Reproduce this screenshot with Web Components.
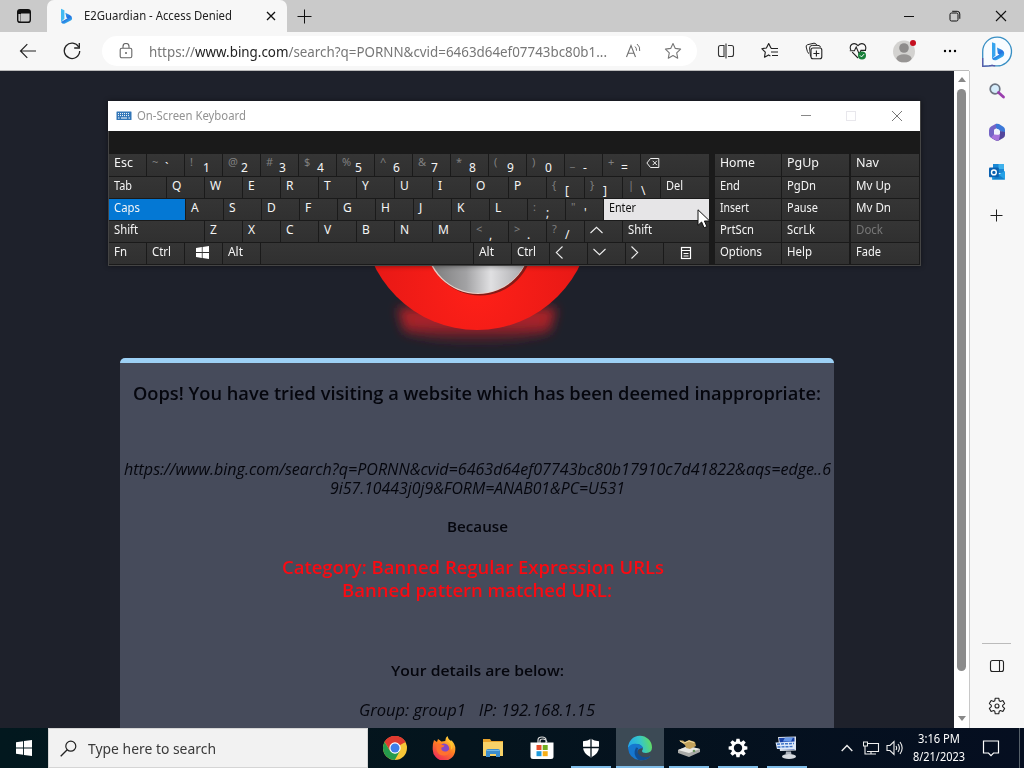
<!DOCTYPE html>
<html lang="en"><head><meta charset="utf-8"><title>E2Guardian - Access Denied</title>
<style>html,body{margin:0;height:100%;overflow:hidden}body{font-family:"Noto Sans","Open Sans",sans-serif}</style></head>
<body><desk-top></desk-top>
<script>
const define=(name,html,after)=>customElements.define(name,class extends HTMLElement{
  connectedCallback(){ if(this.shadowRoot)return; this.attachShadow({mode:'open'}).innerHTML=typeof html==='function'?html(this):html; if(after)after(this); }
});

/* text set to a given width */
define('fit-text',`<style>:host{display:inline-block;flex:none;white-space:pre}span{display:inline-block;transform-origin:0 50%}</style><span><slot></slot></span>`,el=>{
  const w=+el.getAttribute('w'),s=el.shadowRoot.querySelector('span'),n=s.getBoundingClientRect().width;
  if(w&&n){el.style.width=w+'px';s.style.transform=`scaleX(${w/n})`;}
});

const bing=`<defs><linearGradient id="b" x1="0" y1="0" x2=".6" y2="1"><stop offset="0" stop-color="#38b6f2"/><stop offset=".6" stop-color="#2470e0"/><stop offset="1" stop-color="#37bdf0"/></linearGradient></defs>`;
const gearPath=(r1,r2,n,cx,cy)=>{let d='';for(let i=0;i<n;i++){const a=i*2*Math.PI/n,s=Math.PI/n;[[-.78,r1],[-.42,r2],[.42,r2],[.78,r1]].forEach(([k,r],j)=>{d+=(i||j?'L':'M')+(cx+r*Math.sin(a+k*s)).toFixed(2)+' '+(cy-r*Math.cos(a+k*s)).toFixed(2)})}return d+'Z'};
const icons={
 tabs:[16,16,`<rect x="1.7" y="1.7" width="12.6" height="12.6" rx="2.4" fill="none" stroke="#111" stroke-width="1.4"/><path d="M1.7 5.5V4Q1.7 1.7 4 1.7h8q2.3 0 2.3 2.3v1.5zM2 4h3v10H4.6V6H2z" fill="#111"/>`],
 bing:[13,16,bing+`<path d="M1 .8l3.4 1.4v8.6L1 14z" fill="#42baf2"/><path d="M5.3 4.8l4.1 1.9q2.7 1.2 2.7 3.5 0 1.6-1.3 2.4L5 15.6q-2.4.9-4-1.6l6.5-3.7-1.1-.7z" fill="url(#b)"/>`],
 x:[12,12,`<path d="M2 2l8 8M10 2l-8 8" stroke="#111" stroke-width="1.3"/>`],
 plus:[15,15,`<path d="M7.5 .5v14M.5 7.5h14" stroke="#111"/>`],
 plus2:[13,13,`<path d="M6.5 .5v12M.5 6.5h12" stroke="#222"/>`],
 min:[12,12,`<path d="M1 6.5h10" stroke="#111"/>`],
 restore:[12,12,`<rect x="1" y="3" width="8" height="8" rx="1.5" fill="none" stroke="#111"/><path d="M3.2 1.3h5Q10.8 1.3 10.8 4v4.8" fill="none" stroke="#111"/>`],
 close:[12,12,`<path d="M1 1l10 10M11 1L1 11" stroke="#111" stroke-width="1.1"/>`],
 back:[18,16,`<path d="M17 8H1.5M8.3 1.2L1.5 8l6.8 6.8" fill="none" stroke="#222" stroke-width="1.2"/>`],
 reload:[18,18,`<path d="M15.7 5A7.7 7.7 0 1 0 16.7 9" fill="none" stroke="#222" stroke-width="1.3"/><path d="M16.3 1v5H11.2" fill="none" stroke="#222" stroke-width="1.3"/>`],
 lock:[14,16,`<rect x="1.2" y="5.2" width="11.6" height="9.6" rx="1.6" fill="none" stroke="#666" stroke-width="1.1"/><path d="M4 5V3.5a3 3 0 0 1 6 0V5" fill="none" stroke="#666" stroke-width="1.1"/><circle cx="7" cy="10" r="1" fill="#666"/>`],
 read:[18,16,`<path d="M1.5 14L6 2.5 10.5 14M3 10.3h6" fill="none" stroke="#707070" stroke-width="1.1"/><path d="M10 3.5q1.8 1.6 1.5 4.2M12 1q3.4 2.8 2.7 7" fill="none" stroke="#707070"/>`],
 star:[18,18,`<path d="M9 1.5l2.3 4.9 5.3.7-3.9 3.7 1 5.4L9 13.6l-4.7 2.6 1-5.4L1.4 7.1l5.3-.7z" fill="none" stroke="#777" stroke-width="1.1" stroke-linejoin="round"/>`],
 split:[18,18,`<path d="M7 3.5H3.5Q1.5 3.5 1.5 5.5v7q0 2 2 2H7zM11 3.5h3.500q2 0 2 2v7q0 2-2 2H11M9 1.500v15" fill="none" stroke="#333" stroke-width="1.100"/>`],
 fav:[18,18,`<path d="M10.5 6H9.9L7.7 1.5 5.4 6l-4.6.7 3.5 3.5-.8 5 4.1-2.3 1.8 1M10 6.5h7M10 10h7M11 13.5h6" fill="none" stroke="#222" stroke-width="1.15" stroke-linejoin="round"/>`],
 coll:[18,18,`<path d="M4 11.5Q2.8 11 2.4 9.5L1.2 5Q.8 3.2 2.6 2.7L9 1.2Q11 1 11.6 3M5.5 14.5L4.6 6q0-2.6 2.6-2.6H13q2.3 0 2.6 2" fill="none" stroke="#222"/><rect x="6" y="6" width="10.8" height="10.8" rx="2" fill="#f7f7f7" stroke="#222" stroke-width="1.1"/><path d="M11.4 8.5v6M8.4 11.5h6" stroke="#222" stroke-width="1.1"/>`],
 heart:[18,18,`<path d="M1.8 8Q.3 4.7 2.6 2.5 5.9.2 9 3.6q3.1-3.4 6.4-1.1Q17.6 4.7 16.4 8M3.2 10.2L9 16" fill="none" stroke="#222" stroke-width="1.1"/><path d="M.8 8.8h4.6L7.2 5l3 7 1.8-3.6h5" fill="none" stroke="#222" stroke-width="1.1"/><circle cx="13" cy="13.4" r="4" fill="#18803a"/><path d="M11 13.4l1.5 1.5 2.6-2.8" fill="none" stroke="#fff"/>`],
 user:[24,24,`<circle cx="12" cy="12.5" r="11" fill="#d3d2d0"/><circle cx="12" cy="9" r="4.8" fill="#8e8c8b"/><ellipse cx="12" cy="19.3" rx="7.5" ry="4" fill="#979594"/><circle cx="21" cy="4" r="3" fill="#c50f1f"/>`],
 dots:[16,4,`<circle cx="3" cy="2" r="1.2"/><circle cx="8" cy="2" r="1.2"/><circle cx="13" cy="2" r="1.2"/>`],
 bchat:[32,32,bing+`<path d="M1.7 30.3V16A14.4 14.4 0 1 1 14.2 29.8Q11 29.2 8 29.8z" fill="#f8fcff" stroke="#388fc4" stroke-width="1.3"/><path d="M1.700 22v8.300L8 29.800Q11 29.200 14.200 29.800" fill="none" stroke="#5a5aa8" stroke-width="1.300"/><path d="M11 6.2l3.4 1.4v12L11 23z" fill="#36a4ee"/><path d="M16 11.5l4.2 2q3 1.3 3 4.2 0 2-1.5 3L15.8 24q-3 1-4.8-1.2l7.4-4.4-1.6-1z" fill="url(#b)"/>`],
 search:[18,18,`<circle cx="7" cy="7" r="4.8" fill="#d5ecfb" stroke="#6d7582" stroke-width="1.7"/><path d="M10.5 10.5l5 4.5" stroke="#9a3eae" stroke-width="2.8" stroke-linecap="round"/>`],
 office:[18,18,`<path d="M8 .8L3 3.6Q1 5 1 7.2v4.2q0 2 1.6 3L7 17l1-4-2-1.2V6.7L11 3.5z" fill="#7565c6"/><path d="M8 .8q1.6-.4 3 .3l4.3 2.6q1.7 1 1.7 3v3.6l-5-2.4-4-2.8z" fill="#3c78d8"/><path d="M17 9v3q0 2-1.8 3l-4 2.2q-1.8 1-3.8 0L3 14.5l3.3-2 5.5-1 .2-3.6z" fill="#54469c"/><circle cx="9" cy="9" r="2.9" fill="#f2f4fd"/><path d="M3 14.5l3-3 6 .4-1 5q-2 1-4 0z" fill="#a875dc"/>`],
 outlook:[18,18,`<path d="M5 1h11v9H5z" fill="#1b88d4"/><path d="M10.5 1H16v5h-5.5z" fill="#3fb1ec"/><path d="M4 8l6.5 3.5L17 8v8.5H4z" fill="#25a1e7"/><path d="M10.5 11.5L17 16.5H4z" fill="#1680ca"/><rect x="1" y="4.5" width="9.8" height="9.8" rx="1" fill="#0a61b1"/><circle cx="5.9" cy="9.4" r="2.4" fill="none" stroke="#fff" stroke-width="1.4"/>`],
 panel:[16,14,`<rect x="1.5" y="1.5" width="13" height="11" rx="2" fill="none" stroke="#222" stroke-width="1.1"/><path d="M10.5 1.5v11" stroke="#222" stroke-width="1.1"/>`],
 cog:[18,18,`<path d="${gearPath(5.7,8,6,9,9)}" fill="none" stroke="#222" stroke-width="1.1" stroke-linejoin="round"/><circle cx="9" cy="9" r="2" fill="none" stroke="#222" stroke-width="1.1"/>`],
 kb:[16,10,`<rect x=".5" y=".5" width="15" height="8.6" rx=".5" fill="#3276b8"/><path d="M2 2.6h12M2 4.6h12" stroke="#fff" stroke-dasharray="1 1"/><path d="M2 7h1.5M5 7h6M12.5 7H14" stroke="#fff"/>`],
 wmin:[12,12,`<path d="M1 5.5h10" stroke="#888"/>`],
 wmax:[12,12,`<rect x="1.5" y="1.5" width="9" height="9" fill="none" stroke="#e8e7ec"/>`],
 wclose:[12,12,`<path d="M1 1l10 10M11 1L1 11" stroke="#777"/>`],
 bksp:[14,12,`<path d="M4.5 1.5h8.3v9H4.5L.9 6zM6.7 3.8l4.2 4.3M10.9 3.8L6.7 8.1" fill="none" stroke="#eee"/>`],
 up:[13,8,`<path d="M.5 7L6.500 1.3 12.500 7" fill="none" stroke="#eee" stroke-width="1.1"/>`],
 down:[13,8,`<path d="M.5 1L6.500 6.7 12.500 1" fill="none" stroke="#eee" stroke-width="1.1"/>`],
 left:[8,13,`<path d="M7.500 .5L1.3 6.500 7.500 12.500" fill="none" stroke="#eee" stroke-width="1.1"/>`],
 right:[8,13,`<path d="M.5 .5L6.7 6.500 .5 12.500" fill="none" stroke="#eee" stroke-width="1.1"/>`],
 win:[13,13,`<path d="M0 2l5.8-.9v5H0zM6.6 1L13 0v6.1H6.6zM0 6.9h5.8v5L0 11zM6.6 6.9H13V13l-6.4-1z" fill="#fff"/>`],
 menu:[12,14,`<rect x="1.5" y="1.5" width="9" height="11" fill="none" stroke="#fff" stroke-width="1.2"/><path d="M1 4.5h10M3.5 7.5h5M3.5 10h5" stroke="#fff" stroke-width="1.2"/>`],
 start:[16,16,`<path d="M0 2.3l7.1-1v6.3H0zM8 1.1L16 0v7.6H8zM0 8.5h7.1v6.3L0 13.8zM8 8.5h8V16l-8-1.1z" fill="#fff"/>`],
 find:[17,17,`<circle cx="10.8" cy="6.2" r="5" fill="none" stroke="#222" stroke-width="1.2"/><path d="M7.2 9.8L.7 16.3" stroke="#222" stroke-width="1.3"/>`],
 chrome:[24,24,`<circle cx="12" cy="12" r="12" fill="#f8c636"/><path d="M12 12L1.6 6a12 12 0 0 1 20.8 0z" fill="#df3a30"/><path d="M12 6.3h10.5A12 12 0 0 0 1.6 6l5.5 8.8z" fill="#df3a30"/><path d="M1.6 6A12 12 0 0 0 11.8 24l5.2-9.2L12 17.5l-5-2.8z" fill="#259b4c"/><circle cx="12" cy="12" r="5.7" fill="#fff"/><circle cx="12" cy="12" r="4.5" fill="#3f7de9"/>`],
 firefox:[24,24,`<defs><linearGradient id="f" x1=".8" y1="0" x2=".2" y2="1"><stop offset="0" stop-color="#ffe040"/><stop offset=".45" stop-color="#ff8020"/><stop offset="1" stop-color="#ee245f"/></linearGradient></defs><path d="M2 4l3 2 1-3q2 1 3.3 2.5Q12 5 13.3 5 13.2 2 15.4 0q.6 3 3.3 4.7l1-.1q4 4 3.6 9.3A11.3 11.3 0 0 1 .7 13Q.5 8 2 4z" fill="url(#f)"/><circle cx="12" cy="12.8" r="5.2" fill="#8748c5"/><path d="M4.5 8q3.6-.8 6 1l2 .4q-.6 2-3 2.1-1 3 3 4 4 0 5.4-3.6Q19 18.3 13 19.5 6 20 4.6 14z" fill="#ff712f"/><path d="M14.5 4.8Q20.3 8 18.9 14q2.2-2 1.8-5.7-.6-2.5-3-3.3z" fill="#ffc52d"/>`],
 folder:[22,20,`<path d="M1 1h7l1.4 2H21v6H1z" fill="#e9a42c"/><path d="M1 4h20v14H1z" fill="#f8d268"/><path d="M4 19v-6q0-2 2-2h10q2 0 2 2v6h-4v-3H8v3z" fill="#3d8ecd"/><path d="M4.5 12.5h13" stroke="#75bae8"/>`],
 store:[24,24,`<path d="M8 7V4q0-3 4-3t4 3v3M10 7V5q0-2 3-2t4 3" fill="none" stroke="#ddd" stroke-width="1.2"/><path d="M.5 6.5h23v14q0 2.5-2.5 2.5H3q-2.5 0-2.5-2.5z" fill="#fff"/><path d="M6.5 9h5v5h-5z" fill="#e74f2d"/><path d="M12.7 9h5v5h-5z" fill="#73ad22"/><path d="M6.5 15.2h5v5h-5z" fill="#1d9bdc"/><path d="M12.7 15.2h5v5h-5z" fill="#f6ae17"/>`],
 shield:[18,20,`<path d="M9 .8Q12 3.2 17 3.3V9q0 6.5-8 10.5Q1 15.5 1 9V3.3Q6 3.2 9 .8z" fill="#fff"/><path d="M9 1v18M1 9.5h16" stroke="#06131c" stroke-width="1.3"/>`],
 edge:[26,26,`<defs><linearGradient id="e" x1="0" y1=".4" x2="1" y2=".2"><stop offset="0" stop-color="#25a8e9"/><stop offset=".5" stop-color="#35c6c9"/><stop offset="1" stop-color="#68df55"/></linearGradient></defs><path d="M1 13A12 12 0 0 1 25 12.5Q25 17.5 19 18q-4-.2-4-2 1.5-1.8.5-4Q12.5 8 7 9.5 3 10.5 1 13z" fill="url(#e)"/><path d="M1 13Q4 7.5 11 9q4 1 5 4-7 .5-5.5 6.5 2.3 5.5 8.5 3.5l4.5-1.8Q19 26.2 12 25 2 23.5 1 13z" fill="#1677cf"/><path d="M9 12.5Q5 20 11.5 24.9 19.5 26 23.5 21.2q-5 2-9 .3Q8.5 18 11.2 13z" fill="#114e93"/>`],
 drive:[24,20,`<path d="M1 12l10-4 12 3v3l-11 5-11-4z" fill="#a9aaa7"/><path d="M1 12l10-4 12 3-11 4z" fill="#e9e9e5"/><path d="M2 2.500l4 0 2 1.500 4-2 6 2 1 4-6 3-4-1-1-3z" fill="#c3a35d"/><path d="M3 3l4 2 5-2 5 1.500" stroke="#f2dda1" fill="none"/><circle cx="17" cy="13" r="1.3" fill="#66915c"/>`],
 gear:[20,20,`<path d="${gearPath(6.8,9.5,8,10,10)}" fill="#fff"/><circle cx="10" cy="10" r="4.2" fill="#06111e"/>`],
 monitor:[24,24,`<path d="M3 1l18-.5v14L5 15z" fill="#dce2ea"/><path d="M4 2l15.500-.5v12L6 13z" fill="#1841a6"/><path d="M10 1.5l8 0-2 4-8 0z" fill="#6899e7"/><path d="M.5 6.500l20-1v7.500L2 13z" fill="#dfeafa"/><path d="M2 8.200l17-.8M2.5 11l16-.5" stroke="#3f74c8" stroke-dasharray="3 1" stroke-width="1.500"/><path d="M11 15.500h5l.5 3h-6z" fill="#aeb4bd"/><ellipse cx="14" cy="20.5" rx="7" ry="2.5" fill="#d5d9de"/>`],
 chev:[12,8,`<path d="M.7 7L6 1.6 11.3 7" fill="none" stroke="#eee" stroke-width="1.4"/>`],
 net:[18,16,`<path d="M5.5 3.5H16.5v8H5M9 11.5v2M6 14h8M3 6v8h3" fill="none" stroke="#eee" stroke-width="1.1"/><rect x="1.5" y="2" width="4" height="4" fill="#06131d" stroke="#eee"/>`],
 sound:[18,16,`<path d="M1 5.5h3l4-4v13l-4-4H1z" fill="none" stroke="#eee" stroke-width="1.1"/><path d="M10 6q1.3 2 0 4M12 4q2.8 4 0 8M14 2q4.3 6 0 12" fill="none" stroke="#eee" stroke-width="1.1"/>`],
 note:[18,18,`<path d="M1.5 2h15v12h-5L9 16.6 6.5 14h-5z" fill="none" stroke="#fff" stroke-width="1.2"/>`],
 arrow:[14,20,`<path d="M1 .8v15.5l3.6-3.3 2.5 5.8 2.8-1.2-2.5-5.6h5.3z" fill="#fff" stroke="#111"/>`],
 triUp:[8,5,`<path d="M0 5l4-5 4 5z" fill="#888"/>`],
 triDn:[8,5,`<path d="M0 0l4 5 4-5z" fill="#888"/>`]
};
define('ui-icon',el=>{const [w,h,s]=icons[el.getAttribute('name')];return `<style>:host{display:block;flex:none;width:${w}px;height:${h}px}svg{display:block}</style><svg width="${w}" height="${h}" viewBox="0 0 ${w} ${h}">${s}</svg>`});
const cell=(n,w,style='')=>`<div class="c" style="width:${w}px;${style}"><ui-icon name="${n}"></ui-icon></div>`;
const cellCss=`.c{display:flex;align-items:center;justify-content:center;flex:none;box-sizing:border-box}`;

define('tab-strip',`<style>:host{display:flex;height:32px;background:#cacaca}${cellCss}
.tab{box-sizing:border-box;width:240px;background:#f7f7f7;border-radius:7px 7px 0 0;display:flex;align-items:center;padding:0 10px 0 13px;font-size:12px;color:#222}fit-text{margin:-1px 0 0 11px}.sp{flex:1}</style>
${cell('tabs',47)}<div class="tab"><ui-icon name="bing"></ui-icon><fit-text w="148">E2Guardian - Access Denied</fit-text><div class="sp"></div><ui-icon name="x"></ui-icon></div>${cell('plus',35)}<div class="sp"></div>${cell('min',46)}${cell('restore',46)}${cell('close',46)}`);

define('tool-bar',`<style>:host{display:flex;box-sizing:border-box;height:39px;background:#f7f7f7;border-bottom:1px solid #bbb;padding-left:6px}${cellCss}
.addr{display:flex;align-items:center;box-sizing:border-box;width:595px;height:30px;margin:4px 7px 0 8px;background:#fff;border-radius:15px;padding-left:17px;font-size:14.5px;color:#777;flex:none}b{font-weight:400;color:#222}fit-text{margin:-1px 11px 0 16px}.c{height:38px}.addr .c{height:30px}</style>
${cell('back',44)}${cell('reload',44)}<div class="addr"><ui-icon name="lock"></ui-icon><fit-text w="458">https://<b>www.bing.com</b>/search?q=PORNN&amp;cvid=6463d64ef07743bc80b1...</fit-text>${cell('read',32)}${cell('star',46)}</div>
${cell('split',44)}${cell('fav',44)}${cell('coll',44)}${cell('heart',44)}${cell('user',48)}${cell('dots',44)}`);

define('side-bar',`<style>:host{display:flex;flex-direction:column;box-sizing:border-box;background:#f7f7f7;align-items:center}.pane{flex:1;width:55px;border-left:1px solid #c8c8c8;display:flex;flex-direction:column;align-items:center;padding:11px 1px 0 0;box-sizing:border-box}
.top{height:39px;display:flex;align-items:center}.pane ui-icon{margin-bottom:22.5px}.sp{flex:1}hr{width:29px;border:0;border-top:1px solid #bbb;margin:0 0 15.5px}.pane ui-icon:last-child{margin-bottom:13px}ui-icon[name=panel]{margin-bottom:24px!important}ui-icon[name=plus2]{margin-top:5px}</style>
<div class="top"><ui-icon name="bchat"></ui-icon></div><div class="pane"><ui-icon name="search"></ui-icon><ui-icon name="office"></ui-icon><ui-icon name="outlook"></ui-icon><ui-icon name="plus2"></ui-icon><div class="sp"></div><hr><ui-icon name="panel"></ui-icon><ui-icon name="cog"></ui-icon></div>`);

define('scroll-bar',`<style>:host{display:flex;flex-direction:column;align-items:center;background:#fff;box-sizing:border-box;padding:6px 0 7px}.t{width:9px;flex:1;background:#8b8b8b;border-radius:5px;margin:7px 0 45px}</style><ui-icon name="triUp"></ui-icon><div class="t"></div><ui-icon name="triDn"></ui-icon>`);

define('denied-page',`<style>:host{display:flex;flex-direction:column;align-items:center;background:#1e212b;overflow:hidden;font-family:"Open Sans","Noto Sans",sans-serif}
.hero{height:287px;width:714px;flex:none}svg{display:block}
.box{box-sizing:border-box;width:714px;height:500px;flex:none;background:#464b5b;border-top:5px solid #9dd1f6;border-radius:5px 5px 0 0;display:flex;flex-direction:column;align-items:center;color:#05060d}
.box>div{height:20px;line-height:20px;white-space:nowrap;font-size:15.5px}.box .h{font-size:18px;font-weight:600;margin-top:20px}.i{font-style:italic}.box>.u{height:19px;line-height:19px}.box fit-text{display:block}.s{font-weight:600}.box .r{font-size:18.5px;font-weight:600;color:#fa0a12}</style>
<div class="hero"><svg width="714" height="287" viewBox="120 71 714 287"><defs><radialGradient id="r" cx=".5" cy=".82" r=".6"><stop offset="0" stop-color="#ff2018"/><stop offset="1" stop-color="#e01615"/></radialGradient><linearGradient id="g"><stop offset="0" stop-color="#777"/><stop offset=".38" stop-color="#a2a2a4"/><stop offset=".62" stop-color="#e0e0e2"/><stop offset="1" stop-color="#a0a0a3"/></linearGradient><linearGradient id="gl" x1="0" y1="0" x2="0" y2="1"><stop offset="0" stop-color="#b82028"/><stop offset=".55" stop-color="#9c2029"/><stop offset="1" stop-color="#5c2029" stop-opacity=".3"/></linearGradient><filter id="bl" x="-30%" y="-60%" width="160%" height="220%"><feGaussianBlur stdDeviation="5.5"/></filter></defs>
<path d="M398 308H556L550 332Q477 354 404 332z" fill="url(#gl)" filter="url(#bl)"/><circle cx="477" cy="216" r="114" fill="url(#r)"/><circle cx="480" cy="242.5" r="53" fill="#861b17"/><circle cx="478" cy="241.5" r="52.500" fill="#eccfc7"/><circle cx="478.500" cy="241.500" r="51.500" fill="url(#g)"/></svg></div>
<div class="box"><div class="h"><fit-text w="688">Oops! You have tried visiting a website which has been deemed inappropriate:</fit-text></div>
<div class="i u" style="margin-top:57px"><fit-text w="707">https://www.bing.com/search?q=PORNN&amp;cvid=6463d64ef07743bc80b17910c7d41822&amp;aqs=edge..6</fit-text></div>
<div class="i u"><fit-text w="295">9i57.10443j0j9&amp;FORM=ANAB01&amp;PC=U531</fit-text></div>
<div class="s" style="margin-top:18px;font-size:15px"><fit-text w="61">Because</fit-text></div>
<div class="r" style="margin-top:21px;margin-right:8px"><fit-text w="382">Category: Banned Regular Expression URLs</fit-text></div>
<div class="r" style="margin-top:3px"><fit-text w="270">Banned pattern matched URL:</fit-text></div>
<div class="s" style="margin-top:60px;font-size:15px"><fit-text w="173">Your details are below:</fit-text></div>
<div class="i" style="margin-top:20px"><fit-text w="236">Group: group1   IP: 192.168.1.15</fit-text></div></div>`);

/* one key: label (optionally fitted to w), a shifted symbol, or an icon */
define('osk-key',el=>{const a=n=>el.getAttribute(n)||'';const e=s=>s.replace(/&/g,'&amp;').replace(/</g,'&lt;');
 const body=a('icon')?`<div class="ic"><ui-icon name="${a('icon')}"></ui-icon></div>`:a('shift')?`<span class="s">${e(a('shift'))}</span><span class="n">${e(a('label'))}</span>`:a('fit')?`<fit-text w="${a('fit')}">${a('label')}</fit-text>`:e(a('label'));
 return `<style>:host{display:flex;box-sizing:border-box;background:linear-gradient(#353535,#303030);color:#f5f5f5;font-size:12px;line-height:18px;padding-left:5px;overflow:hidden;white-space:pre}:host([on]){background:#0478d4}:host([hot]){background:#e6e5e7;color:#111}:host([off]){color:#777}.s{color:#808080;width:13px;font-size:11px;margin-top:-1px}.n{margin-top:5px}.ic{height:18px;display:flex;align-items:center}:host([mid]){padding:0 2px 2px 0;justify-content:center;align-items:center}</style>${body}`});

const K=(w,label,o='')=>`<osk-key style="width:${w}px" label="${label.replace(/&/g,'&amp;').replace(/"/g,'&quot;')}" ${o}></osk-key>`;
const F=(w,l,f,o='')=>K(w,l,`fit="${f}" ${o}`);
const S=(l,s)=>K(37,l,`shift="${s.replace(/&/g,'&amp;').replace(/"/g,'&quot;')}"`);
const I=(w,n,o='')=>K(w,'',`icon="${n}" ${o}`);
const L=s=>[...s].map(c=>K(37,c)).join('');
const main=[
 F(37,'Esc',19)+['`~','1!','2@','3#','4$','5%','6^','7&','8*','9(','0)','-_','=+'].map(p=>S(p[0],p[1])).join('')+I(68,'bksp'),
 F(57,'Tab',18)+L('QWERTYUIOP')+S('[','{')+S(']','}')+S('\\','|')+F(48,'Del',17),
 F(76,'Caps',26,'on')+L('ASDFGHJKL')+S(';',':')+S("'",'"')+F(105,'Enter',27,'hot'),
 F(95,'Shift',24)+L('ZXCVBNM')+S(',','<')+S('.','>')+S('/','?')+I(37,'up')+F(86,'Shift',24),
 F(37,'Fn',13)+F(37,'Ctrl',19)+I(37,'win','mid')+F(37,'Alt',15)+K(212,'')+F(37,'Alt',15)+F(37,'Ctrl',19)+I(37,'left')+I(37,'down')+I(37,'right')+I(45,'menu','mid')];
const nav=[['Home',35,'PgUp',32,'Nav',23],['End',20,'PgDn',29,'Mv Up',35],['Insert',29,'Pause',31,'Mv Dn',35],['PrtScn',34,'ScrLk',28,'Dock',27],['Options',42,'Help',25,'Fade',25]];
define('on-screen-keyboard',`<style>:host{display:block;box-sizing:border-box;width:813px;height:165px;background:#1a1a1a;border:1px solid #444;border-top:0;box-shadow:0 0 5px #0007}${cellCss}
.title{height:30px;background:#fff;display:flex;align-items:center;padding-left:8px;margin:0 0 0 -1px;font-size:12px;color:#929292}.title ui-icon[name=kb]{margin-top:-1px}.title fit-text{margin:-1px 0 0 5px}.c{padding-bottom:1px}.sp{flex:1}
.rows{margin-top:23px;display:grid;grid-template-rows:22px repeat(4,21px);gap:1px}.row{display:flex;gap:1px}.g{width:4px}.g2{width:0}</style>
<div class="title"><ui-icon name="kb"></ui-icon><fit-text w="109">On-Screen Keyboard</fit-text><div class="sp"></div>${cell('wmin',45)}${cell('wmax',46)}${cell('wclose',46)}</div>
<div class="rows">${main.map((r,i)=>`<div class="row">${r}<div class="g"></div>${F(66,nav[i][0],nav[i][1])}${F(67,nav[i][2],nav[i][3])}<div class="g2"></div>${F(68,nav[i][4],nav[i][5],i==3?'off':'')}</div>`).join('')}</div>`);

const app=(n,cls='')=>`<div class="app ${cls}"><ui-icon name="${n}"></ui-icon></div>`;
define('task-bar',`<style>:host{display:flex;height:40px;background:linear-gradient(90deg,#02181e,#04141d 45%,#050e20);color:#fff}${cellCss}
.q{width:320px;box-sizing:border-box;background:#f2f2f2;border:1px solid #d5d5d5;display:flex;align-items:center;padding-left:11px;font-size:15px;color:#3a3a3a}.q fit-text{margin-left:11px}.apps{display:flex;gap:1px;margin-left:3px}.app{width:48px;height:40px;box-sizing:border-box;display:flex;align-items:center;justify-content:center;position:relative}.run::after{content:"";position:absolute;left:4px;right:4px;bottom:0;height:2px;background:#80bde9}.act{background:#3c4a55}.act::after{left:0;right:0}.sp{flex:1}
.clock{width:65px;display:flex;flex-direction:column;align-items:center;font-size:12px;line-height:18px;padding:2px 2px 0 0;box-sizing:border-box}.end{width:4px;border-left:1px solid #566069;margin-left:9px}</style>
${cell('start',48)}<div class="q"><ui-icon name="find"></ui-icon><fit-text w="128">Type here to search</fit-text></div><div class="apps">${app('chrome')}${app('firefox')}${app('folder')}${app('store')}${app('shield','run')}${app('edge','run act')}${app('drive','run')}${app('gear','run')}${app('monitor','run')}</div><div class="sp"></div>
${cell('chev',24)}${cell('net',24)}${cell('sound',24)}<div class="clock"><fit-text w="42">3:16 PM</fit-text><fit-text w="52">8/21/2023</fit-text></div>${cell('note',38)}<div class="end"></div>`);

define('desk-top',`<style>:host{display:grid;width:1024px;height:768px;grid-template:32px 39px 657px 40px/954px 15px 55px;position:relative;overflow:hidden}
tab-strip,task-bar{grid-column:1/4}tool-bar{grid-column:1/3}side-bar{grid-area:2/3/4/4}denied-page{grid-area:3/1}scroll-bar{grid-area:3/2}task-bar{grid-row:4}
on-screen-keyboard{position:absolute;left:108px;top:101px}.ptr{position:absolute;left:697px;top:209px}</style>
<tab-strip></tab-strip><tool-bar></tool-bar><side-bar></side-bar><denied-page></denied-page><scroll-bar></scroll-bar><task-bar></task-bar>
<on-screen-keyboard></on-screen-keyboard><ui-icon class="ptr" name="arrow"></ui-icon>`);
</script></body></html>
